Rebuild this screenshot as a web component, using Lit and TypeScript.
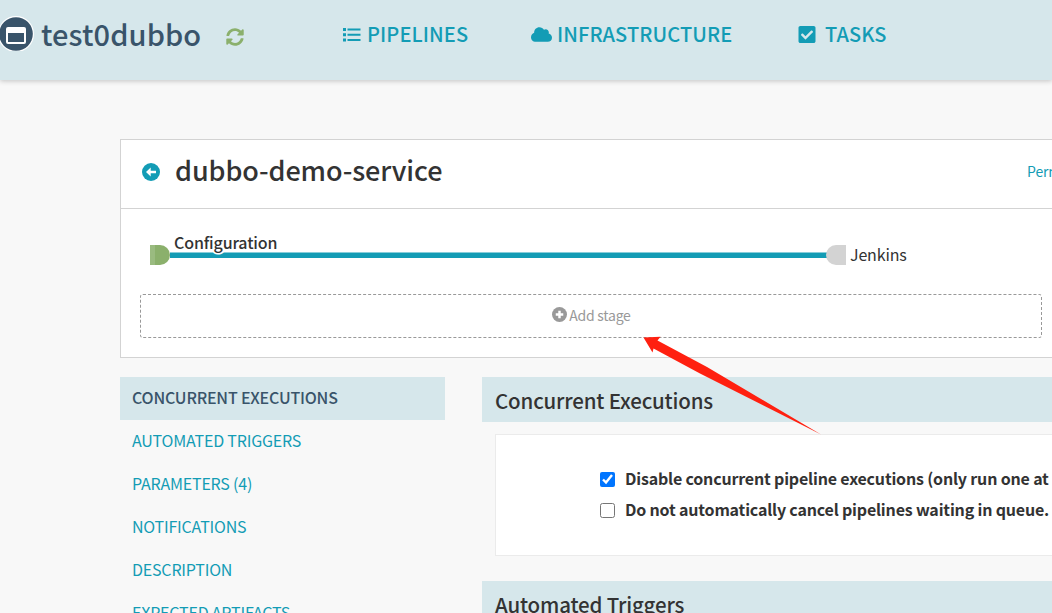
import { LitElement, html, css, svg } from "lit";
import { customElement } from "lit/decorators.js";

const sections = [
  "Concurrent Executions",
  "Automated Triggers",
  "Parameters (4)",
  "Notifications",
  "Description",
  "Expected Artifacts",
];

const listIcon = svg`<svg class="list" viewBox="0 0 18 16" width="18" height="16"><path d="M0 1h3v3H0zM0 6.200h3v3H0zM0 11.400h3v3H0zM4.500 1.500h13v2H4.500zM4.500 6.700h13v2H4.500zM4.500 11.900h13v2H4.500z"/></svg>`;
const cloudIcon = svg`<svg class="cloud" viewBox="0 0 640 448" width="21" height="15"><path d="M537.600 194.600c4.100-10.700 6.400-22.400 6.400-34.600 0-53-43-96-96-96-19.700 0-38.100 6-53.300 16.200C367 32.200 315.300 0 256 0c-88.400 0-160 71.600-160 160 0 2.700.1 5.400.2 8.100C40.200 187.800 0 241.200 0 304c0 79.500 64.500 144 144 144h368c70.700 0 128-57.300 128-128 0-61.900-44-113.600-102.400-125.400z"/></svg>`;
const checkIcon = svg`<svg class="check" viewBox="0 0 448 448" width="18" height="17"><path d="M400 448H48c-26.500 0-48-21.500-48-48V48C0 21.500 21.500 0 48 0h352c26.500 0 48 21.500 48 48v352c0 26.500-21.500 48-48 48zm-204.700-98.100 184-184c6.200-6.200 6.200-16.400 0-22.600l-22.600-22.600c-6.200-6.200-16.400-6.200-22.600 0L184 270.800l-70.100-70.100c-6.200-6.200-16.400-6.200-22.600 0l-22.600 22.600c-6.200 6.200-6.200 16.400 0 22.600l104 104c6.200 6.300 16.400 6.300 22.600 0z"/></svg>`;
const refreshIcon = svg`<svg viewBox="0 0 512 512" width="18" height="18"><path d="M370.700 133.300C339.500 104 298.900 88 255.800 88c-77.500.1-144.300 53.200-162.800 126.900-1.300 5.400-6.100 9.100-11.700 9.100H24.100c-7.500 0-13.200-6.800-11.800-14.200C33.900 94.900 134.800 8 256 8c66.400 0 126.800 26.100 171.300 68.700L463 41c15.100-15.100 41-4.400 41 17v134c0 13.300-10.700 24-24 24H346c-21.400 0-32.100-25.900-17-41zM32 296h134c21.400 0 32.100 25.900 17 41l-41.800 41.800c31.300 29.300 71.800 45.300 114.900 45.300 77.400-.1 144.300-53.100 162.800-126.800 1.300-5.400 6.100-9.100 11.700-9.100h57.300c7.500 0 13.200 6.800 11.800 14.200C478.100 417.100 377.200 504 256 504c-66.400 0-126.800-26.100-171.300-68.700L49 471c-15.100 15.100-41 4.400-41-17V320c0-13.300 10.700-24 24-24z"/></svg>`;

@customElement("app-root")
export class AppRoot extends LitElement {
  static styles = css`
    :host {
      display: block;
      position: relative;
      height: 613px;
      overflow: hidden;
      background: #f8f8f8;
      color: #333;
      font-family: "Noto Sans CJK SC", "Source Sans Pro", sans-serif;
      white-space: nowrap;
    }
    svg { display: block; flex: none; }
    header {
      box-sizing: border-box;
      height: 80px;
      background: #d6e7eb;
      box-shadow: 0 1px 5px rgba(0, 0, 0, 0.22);
      display: flex;
      align-items: flex-start;
      fill: #139cb5;
    }
    .logo { margin: 15px 0 0 -2px; }
    .brand { margin: 13px 0 0 7px; width: 185px; font-size: 29px; line-height: 40px; font-weight: 500; letter-spacing: 0.1px; color: #39546a; }
    .refresh { margin-top: 28px; fill: #8bb06c; width: 117px; }
    .nav { display: flex; align-items: center; height: 30px; margin-top: 20px; color: #139cb5; font-size: 20px; line-height: 30px; font-weight: 500; letter-spacing: 0.1px; text-transform: uppercase; }
    .nav span { margin-top: -2px; }
    .check, .cloud { margin-bottom: 1px; }
    .pipelines { width: 188px; gap: 6px; }
    .infra { width: 267px; gap: 5px; }
    .tasks { gap: 9px; }
    .card { box-sizing: border-box; width: 943px; height: 219px; margin: 59px 0 0 120px; border: 1px solid #d3d3d3; background: #fff; }
    .title { box-sizing: border-box; display: flex; align-items: center; height: 69px; border-bottom: 1px solid #d3d3d3; padding: 0 0 4px 21px; }
    .title h1 { flex: none; width: 852px; margin: -4px 0 0 15px; font-size: 27px; line-height: 40px; font-weight: 500; letter-spacing: -0.1px; }
    .permalink { color: #139cb5; font-size: 14px; line-height: 20px; margin-top: -2px; letter-spacing: -0.1px; }
    .graph { height: 65px; margin: 20px 0 0 29px; display: block; }
    .graph text { font-size: 16px; fill: #333; letter-spacing: -0.15px; }
    .graph .stage { font-weight: 500; stroke: #fff; stroke-width: 3px; paint-order: stroke; }
    .add { box-sizing: border-box; display: flex; justify-content: center; align-items: center; gap: 2px; width: 902px; height: 44px; margin-left: 19px; padding: 0 0 2px 1px; border: 1px dashed #999; border-radius: 3px; color: #999; font-size: 14px; letter-spacing: -0.25px; }
    .add svg { margin-bottom: 2px; }
    .columns { display: flex; align-items: flex-start; gap: 37px; padding: 19px 0 0 120px; }
    .menu { flex: none; width: 325px; }
    .item { box-sizing: border-box; height: 43px; line-height: 40px; padding-left: 12px; color: #139cb5; font-size: 16px; letter-spacing: -0.2px; text-transform: uppercase; }
    .item.active { background: #d6e7eb; color: #39546a; font-weight: 500; }
    .content { flex: none; width: 581px; }
    h2 { box-sizing: border-box; height: 45px; margin: 0; padding-left: 13px; background: #d6e7eb; font-size: 20.5px; line-height: 46px; font-weight: 500; letter-spacing: -0.17px; }
    .panel { box-sizing: border-box; height: 122px; margin: 12px 0 25px 13px; padding: 29px 0 0 104px; border: 1px solid #ebebeb; background: #fff; }
    .option { display: flex; align-items: center; height: 31px; font-size: 16px; line-height: 24px; font-weight: 700; letter-spacing: -0.18px; }
    .option span { margin-top: -4px; }
    .option input { width: 15px; height: 15px; margin: 0 10px 0 0; flex: none; }
    .pointer { position: absolute; left: 640px; top: 333px; }
  `;

  render() {
    return html`
      <header>
        <svg class="logo" viewBox="0 0 36 36" width="36" height="36">
          <circle cx="18" cy="19" r="18" fill="#fff" /><circle cx="18" cy="19" r="16.800" fill="#39546a" />
          <rect x="8" y="12" width="20" height="17" rx="2" fill="#fff" /><rect x="10" y="18" width="16" height="9" fill="#39546a" />
        </svg>
        <div class="brand"><span>test0dubbo</span></div>
        <div class="refresh">${refreshIcon}</div>
        <div class="nav pipelines">${listIcon}<span>Pipelines</span></div>
        <div class="nav infra">${cloudIcon}<span>Infrastructure</span></div>
        <div class="nav tasks">${checkIcon}<span>Tasks</span></div>
      </header>
      <section class="card">
        <div class="title">
          <svg viewBox="0 0 18 18" width="18" height="18"><circle cx="9" cy="9" r="9" fill="#139cb5" /><path d="M4 9 8.700 4.500V7.700H14V10.300H8.700V13.500z" fill="#fff" /></svg>
          <h1><span>dubbo-demo-service</span></h1>
          <span class="permalink">Permalink</span>
        </div>
        <svg class="graph" width="880" height="65">
          <path d="M20 26.200H677" stroke="#139cb5" stroke-width="5.400" />
          <path d="M0 16h10a10 10 0 0 1 0 20H0z" fill="#8bb06c" /><path d="M0 16h5v20H0z" fill="#9abb80" />
          <path d="M696 16h-10a10 10 0 0 0 0 20h10z" fill="#d3d3d3" />
          <text class="stage" x="24" y="20">Configuration</text>
          <text x="700" y="32">Jenkins</text>
        </svg>
        <div class="add">
          <svg viewBox="0 0 16 16" width="15" height="15"><circle cx="8" cy="8" r="8" fill="#999" /><path d="M8 4v8M4 8h8" stroke="#fff" stroke-width="2.600" /></svg>
          <span>Add stage</span>
        </div>
      </section>
      <div class="columns">
        <nav class="menu">
          ${sections.map((s, i) => html`<div class="item ${i === 0 ? "active" : ""}"><span>${s}</span></div>`)}
        </nav>
        <main class="content">
          <h2>Concurrent Executions</h2>
          <div class="panel">
            <label class="option"><input type="checkbox" checked /><span>Disable concurrent pipeline executions (only run one at a time).</span></label>
            <label class="option"><input type="checkbox" /><span>Do not automatically cancel pipelines waiting in queue.</span></label>
          </div>
          <h2>Automated Triggers</h2>
        </main>
      </div>
      <svg class="pointer" width="184" height="104"><path d="M3.500 4.500 20.500 3.800 17.500 7.500 67 34 181 101.500 60 40.500 13.500 15.500 12.500 19.500z" fill="#ff2010" /></svg>
    `;
  }
}
